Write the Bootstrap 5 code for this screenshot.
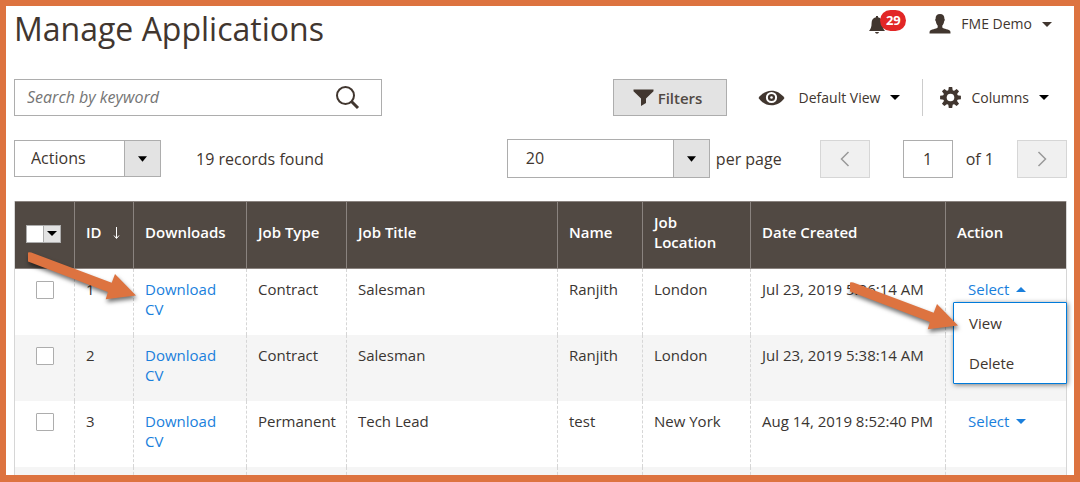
<!DOCTYPE html>
<html lang="en">
<head>
<meta charset="utf-8">
<meta name="viewport" content="width=device-width, initial-scale=1">
<title>Manage Applications</title>
<link href="https://cdn.jsdelivr.net/npm/bootstrap@5.3.0/dist/css/bootstrap.min.css" rel="stylesheet">
<style>
:root { --ink:#41362f; --text:#3a3532; --line:#adadad; --brand:#dd7340; --head:#514943; --blue:#1a7fdc; }
body { font-family:"Open Sans","Noto Sans",sans-serif; font-size:16px; line-height:20px; color:var(--ink); background:#fff; }
.frame { height:100vh; overflow:hidden; border:6px solid var(--brand); border-bottom-width:7px; padding:0 7px 0 8px; }
.frame a { text-decoration:none; }
.page-title { font-size:32px; line-height:40px; font-weight:400; margin:0; }
.topbar { height:73px; padding:3px 15px 0 0; }
.plain { background:none; border:0; padding:0; color:var(--ink); display:flex; align-items:center; gap:10px; }
.plain svg, .btn-filter svg { flex:none; }
.user-row { height:30px; font-size:14px; }
.bell { position:relative; width:38px; height:20px; margin-right:23px; }
.bell svg { position:absolute; left:0; top:1px; }
.count { position:absolute; left:12px; top:-4px; width:26px; height:21px; border-radius:11px; background:#e22626; color:#fff; font-size:13px; font-weight:700; line-height:20px; text-align:center; }
.caret { width:0; height:0; border:5px solid transparent; border-top-color:currentColor; border-bottom:0; }
.caret.up { border-top:0; border-bottom:5px solid currentColor; }
.search { width:368px; height:37px; border:1px solid var(--line); }
.search input { border:0; outline:0; background:none; padding:0 0 2px 12px; width:312px; font-size:16px; }
.search input::placeholder { font-style:italic; color:#757575; opacity:1; }
.btn-filter { width:114px; height:37px; border:1px solid var(--line); background:#e3e3e3; font-weight:600; font-size:15px; color:var(--head); display:flex; align-items:center; justify-content:center; gap:4px; padding:0 4px 0 0; margin-right:31px; }
.view-btn { font-size:14px; margin-right:22px; }
.view-btn svg { margin-right:4px; }
.cols-btn { font-size:14px; height:37px; border-left:1px solid #ccc; padding:0 18px 0 17px; }
.second { margin-top:23px; }
.pick { appearance:none; border:1px solid var(--line); border-radius:0; color:var(--ink); padding:0 0 1px 16px; height:37px; width:147px;
  background:url("data:image/svg+xml,%3Csvg xmlns='http://www.w3.org/2000/svg' viewBox='0 0 10 6'%3E%3Cpath d='M0 0h10L5 6z'/%3E%3C/svg%3E") right 13px center/9px 6px no-repeat,
  linear-gradient(var(--line),var(--line)) right 35px top/1px 100% no-repeat,
  linear-gradient(#e3e3e3,#e3e3e3) right top/35px 100% no-repeat #fff; }
.pick.size { width:203px; height:39px; padding-left:18px; }
.found { margin-left:35px; }
.per { margin:0 38px 0 6px; }
.of { margin:0 23px 0 13px; }
.pager { width:50px; height:38px; border:1px solid #d6d6d6; background:#f0f0f0; padding:0; display:grid; place-items:center; }
.pagebox { width:50px; height:38px; border:1px solid var(--line); text-align:center; padding:0; color:var(--ink); margin-left:33px; }
.grid { width:100%; table-layout:fixed; margin-top:23px; font-size:15px; border-collapse:separate; border-spacing:0; color:var(--text); border-left:1px solid #d6d6d6; border-right:1px solid #d6d6d6; }
.grid th { height:68px; background:var(--head); color:#fff; font-weight:600; padding:0 11px 6px; border-left:1px solid #8a837f; border-top:1px solid #8a837f; border-bottom:1px solid #8a837f; vertical-align:middle; }
.grid td { height:66px; padding:10px 11px 0; vertical-align:top; border-left:1px dashed #d6d6d6; }
.grid th:first-child, .grid td:first-child { border-left:0; }
.grid tbody tr:nth-child(even) td { background:#f5f5f5; }
.grid a:not(.dropdown-item) { color:var(--blue); }
.w-check { width:59px } .w-id { width:59px } .w-down { width:113px } .w-type { width:100px } .w-name { width:85px } .w-loc { width:108px } .w-date { width:195px } .w-act { width:121px }
.tick { appearance:none; display:block; width:18px; height:18px; margin:2px 0 0 10px; border:1px solid var(--line); border-radius:1px; background:#fff; }
.multi { width:35px; height:18px; margin-top:3px; background:#e3e3e3; border:1px solid var(--line); }
.multi .tick { margin:0; width:17px; height:16px; border:0; border-right:1px solid var(--line); border-radius:0; }
.multi button { background:none; border:0; padding:0; color:#000; width:16px; display:grid; place-items:center; }
.sel-btn { background:none; border:0; padding:0 0 0 11px; color:var(--blue); display:flex; align-items:center; gap:7px; line-height:20px; }
.sel-menu { left:-4px; top:23px; width:114px; min-width:0; padding:0; border:1px solid #007bdb; border-radius:1px; box-shadow:1px 1px 5px rgba(0,0,0,.5); font-size:15px; }
.sel-menu .dropdown-item { color:var(--ink); line-height:20px; padding:10px 15px; }
.pointer { position:absolute; left:22px; top:244px; width:124px; height:62px; z-index:1100; pointer-events:none; filter:drop-shadow(1px 3px 2px rgba(0,0,0,.55)); }
.pointer.to-view { left:auto; right:100px; top:274px; }
</style>
</head>
<body>
<main class="frame position-relative">
  <header class="topbar d-flex justify-content-between align-items-start">
    <h1 class="page-title">Manage Applications</h1>
    <div class="user-row d-flex align-items-center">
      <button class="plain bell" type="button" aria-label="Notifications">
        <svg width="18" height="19" viewBox="0 0 18 19" fill="#41362f"><path d="M8 1h2v1.200C13 3 14.400 5 14.400 8c0 4 .9 6.200 2.600 8H1c1.700-1.800 2.600-4 2.600-8C3.600 5 5 3 8 2.200zM7 17h4c-.4 1.200-1 1.700-2 1.700S7.400 18.200 7 17z"/></svg>
        <span class="count">29</span>
      </button>
      <button class="plain" type="button">
        <svg width="22" height="20" viewBox="0 0 22 20" fill="#41362f"><path d="M11 0c3 0 4.500 1.800 4.400 4.800.6.300.5 2-.3 2.600C14.800 9.600 14 10.600 13.300 11.500v2c1.200 1.400 7.200 1.800 7.900 3.600.3.700.3 1.500.3 2.400H.5c0-.9 0-1.700.3-2.400.7-1.800 6.700-2.200 7.900-3.600v-2C8 10.600 7.200 9.600 6.900 7.400 6.100 6.800 6 5.100 6.600 4.800 6.500 1.800 8 0 11 0z"/></svg>
        <span>FME Demo</span><span class="caret"></span>
      </button>
    </div>
  </header>

  <section class="d-flex align-items-center">
    <div class="search d-flex align-items-center">
      <input type="text" aria-label="Search by keyword" placeholder="Search by keyword">
      <button class="plain ms-2" type="button" aria-label="Search">
        <svg width="26" height="25" viewBox="0 0 26 25" fill="none" stroke="#41362f"><circle cx="10.500" cy="10.500" r="8.500" stroke-width="2"/><path d="M16.500 16.500l6.500 6.500" stroke-width="3"/></svg>
      </button>
    </div>
    <button class="btn-filter ms-auto" type="button">
      <svg width="21" height="17" viewBox="0 0 21 17" fill="#41362f"><path d="M.5.500h20v1.700L13 9.500V14L8 17V9.500L.5 2.200z"/></svg>Filters
    </button>
    <button class="plain view-btn" type="button">
      <svg width="27" height="16" viewBox="0 0 27 16"><path d="M.5 8C4 3.200 8.500.700 13.500.700S23 3.200 26.500 8C23 12.800 18.500 15.300 13.500 15.300S4 12.800.5 8z" fill="#41362f"/><circle cx="13.500" cy="7.500" r="4.600" fill="none" stroke="#fff" stroke-width="2"/><circle cx="13.500" cy="7.500" r="1.300" fill="#fff"/></svg>
      <span>Default View</span><span class="caret text-black"></span>
    </button>
    <button class="plain cols-btn" type="button">
      <svg width="21" height="21" viewBox="-10.500 -10.500 21 21"><g fill="#41362f"><circle r="7.500"/><path id="tooth" d="M-2.300-6.500l.6-3.900h3.400l.6 3.900zM-2.300 6.500l.6 3.900h3.400l.6-3.900z"/><use href="#tooth" transform="rotate(45)"/><use href="#tooth" transform="rotate(90)"/><use href="#tooth" transform="rotate(135)"/></g><circle r="3.800" fill="#fff"/></svg>
      <span>Columns</span><span class="caret text-black"></span>
    </button>
  </section>

  <section class="second d-flex align-items-center">
    <select class="pick" aria-label="Actions"><option>Actions</option></select>
    <span class="found">19 records found</span>
    <select class="pick size ms-auto" id="size"><option>20</option></select>
    <label class="per" for="size">per page</label>
    <button class="pager" type="button" aria-label="Previous page"><svg width="10" height="16" viewBox="0 0 10 16" fill="none" stroke="#999" stroke-width="1.500"><path d="M8.500 1L1.500 8l7 7"/></svg></button>
    <input class="pagebox" type="text" id="page" value="1">
    <label class="of" for="page">of 1</label>
    <button class="pager" type="button" aria-label="Next page"><svg width="10" height="16" viewBox="0 0 10 16" fill="none" stroke="#999" stroke-width="1.500"><path d="M1.500 1l7 7-7 7"/></svg></button>
  </section>

  <table class="grid">
    <colgroup><col class="w-check"><col class="w-id"><col class="w-down"><col class="w-type"><col><col class="w-name"><col class="w-loc"><col class="w-date"><col class="w-act"></colgroup>
    <thead>
      <tr>
        <th><div class="multi d-flex"><input class="tick" type="checkbox" aria-label="Select all"><button type="button" aria-label="Selection options"><span class="caret"></span></button></div></th>
        <th class="text-nowrap">ID <svg class="ms-2" width="7" height="13" viewBox="0 0 7 13" fill="none" stroke="#fff"><path d="M3.500 0v11M1 8.500l2.500 3L6 8.500"/></svg></th>
        <th>Downloads</th><th>Job Type</th><th>Job Title</th><th>Name</th><th>Job Location</th><th>Date Created</th><th>Action</th>
      </tr>
    </thead>
    <tbody>
      <tr>
        <td><input class="tick" type="checkbox" aria-label="Row 1"></td><td>1</td><td><a href="#">Download CV</a></td><td>Contract</td><td>Salesman</td><td>Ranjith</td><td>London</td><td class="text-nowrap">Jul 23, 2019 5:36:14 AM</td>
        <td><div class="position-relative"><button class="sel-btn" type="button" aria-expanded="true">Select <span class="caret up"></span></button>
          <div class="dropdown-menu sel-menu show"><a class="dropdown-item" href="#">View</a><a class="dropdown-item" href="#">Delete</a></div></div></td>
      </tr>
      <tr>
        <td><input class="tick" type="checkbox" aria-label="Row 2"></td><td>2</td><td><a href="#">Download CV</a></td><td>Contract</td><td>Salesman</td><td>Ranjith</td><td>London</td><td class="text-nowrap">Jul 23, 2019 5:38:14 AM</td><td></td>
      </tr>
      <tr>
        <td><input class="tick" type="checkbox" aria-label="Row 3"></td><td>3</td><td><a href="#">Download CV</a></td><td>Permanent</td><td>Tech Lead</td><td>test</td><td>New York</td><td class="text-nowrap">Aug 14, 2019 8:52:40 PM</td>
        <td><button class="sel-btn" type="button">Select <span class="caret"></span></button></td>
      </tr>
      <tr><td></td><td></td><td></td><td></td><td></td><td></td><td></td><td></td><td></td></tr>
    </tbody>
  </table>

  <svg class="pointer" viewBox="28 250 124 62" fill="#dd7340"><path id="arrow" d="M31.300 252.500L111.700 282.700L115 274L136 295.500L105.700 299.300L107.900 292L28 261.500A4.700 4.700 0 0 1 31.300 252.500z"/></svg>
  <svg class="pointer to-view" viewBox="28 250 124 62" fill="#dd7340"><use href="#arrow"/></svg>
</main>
<script src="https://cdn.jsdelivr.net/npm/bootstrap@5.3.0/dist/js/bootstrap.bundle.min.js"></script>
</body>
</html>
